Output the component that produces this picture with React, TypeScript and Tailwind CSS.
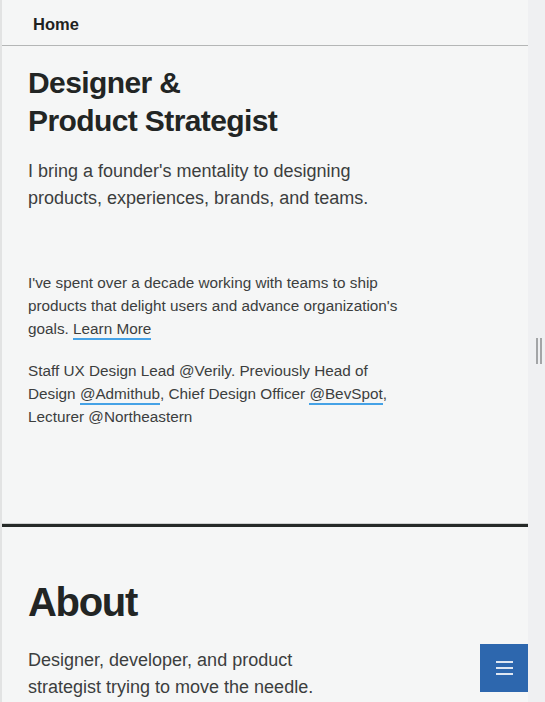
const FONT = "font-['Liberation_Sans',Arial,Helvetica,sans-serif]";

function UnderlinedLink({ children }: { children: string }) {
  return (
    <a href="#" className="border-b-2 border-[#45a2e6] pb-[1px] text-inherit no-underline">
      {children}
    </a>
  );
}

function ScrollHandle() {
  return (
    <div className="flex gap-[2px] pl-[5px]">
      <span className="block h-[26px] w-[2px] bg-[#a3a5a7]" />
      <span className="block h-[26px] w-[2px] bg-[#a3a5a7]" />
    </div>
  );
}

export default function App() {
  return (
    <div className={`${FONT} flex h-[702px] w-[545px] overflow-hidden bg-[#eff0f2]`}>
      <main className="relative h-full w-[528px] shrink-0 overflow-hidden border-l-2 border-[#e2e3e3] bg-[#f5f6f6]">
        <nav className="flex h-[46px] items-center border-b border-[#b4b6b6] px-[31px] pt-[4px]">
          <a href="#" className="text-[16.5px] font-bold text-[#1f2221]">
            Home
          </a>
        </nav>

        <section className="border-b border-[#cfd1d1] px-[26px] pt-[18px] pb-[95px]">
          <h1 className="text-[30px] font-bold leading-[38px] tracking-[-0.6px] text-[#222524]">
            Designer &amp;
            <br />
            Product Strategist
          </h1>
          <p className="mt-[17.5px] max-w-[384px] text-[18px] leading-[27px] text-[#3c3e3e]">
            I bring a founder's mentality to designing products, experiences, brands, and teams.
          </p>
          <p className="mt-[59.5px] max-w-[384px] text-[15.3px] leading-[23px] text-[#3c3e3e]">
            I've spent over a decade working with teams to ship products that delight users and
            advance organization's goals. <UnderlinedLink>Learn More</UnderlinedLink>
          </p>
          <p className="mt-[19px] max-w-[384px] text-[15.3px] leading-[23px] text-[#3c3e3e]">
            Staff UX Design Lead @Verily. Previously Head of Design{" "}
            <UnderlinedLink>@Admithub</UnderlinedLink>, Chief Design Officer{" "}
            <UnderlinedLink>@BevSpot</UnderlinedLink>, Lecturer @Northeastern
          </p>
        </section>

        <section className="border-t-[3px] border-[#262a28] px-[26px] pt-[51px]">
          <h2 className="text-[40px] font-bold leading-[48px] tracking-[-1.3px] text-[#222524]">
            About
          </h2>
          <p className="mt-[21px] max-w-[320px] text-[18px] leading-[27px] text-[#3c3e3e]">
            Designer, developer, and product strategist trying to move the needle.
          </p>
        </section>

        <button
          type="button"
          aria-label="Menu"
          className="absolute right-0 bottom-[10px] flex h-[48px] w-[48px] flex-col items-center justify-center gap-[4px] bg-[#2d67ae]"
        >
          <span className="block h-[2px] w-[17px] bg-[#dfe7f2]" />
          <span className="block h-[2px] w-[17px] bg-[#dfe7f2]" />
          <span className="block h-[2px] w-[17px] bg-[#dfe7f2]" />
        </button>
      </main>

      <aside className="flex flex-1 items-center justify-center">
        <ScrollHandle />
      </aside>
    </div>
  );
}
